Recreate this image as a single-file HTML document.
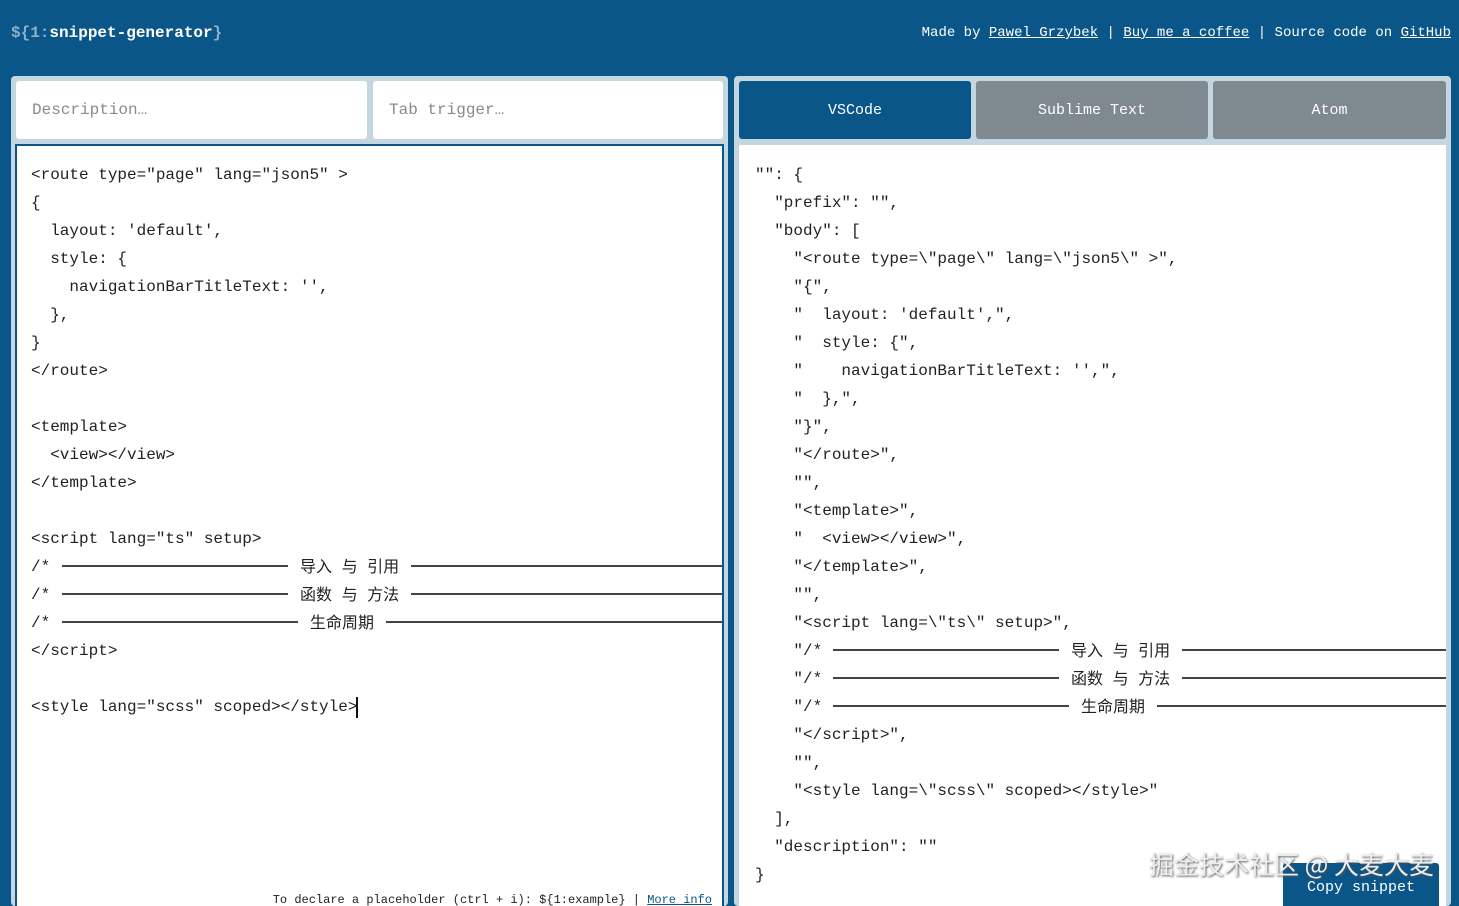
<!DOCTYPE html>
<html style="width:1459px;height:906px;overflow:hidden"><head><meta charset="utf-8">
<style>
*{margin:0;padding:0;box-sizing:border-box}
body{width:1459px;height:906px;background:#0a5689;position:relative;overflow:hidden;font-family:"Liberation Mono","Noto Sans CJK SC",monospace;}
.abs{position:absolute}
.logo{left:11px;top:24px;font-size:16px;font-weight:bold;color:#fff;white-space:pre}
.logo .d{color:#8fb0c9}
.nav{right:8px;top:25px;font-size:14px;color:#fff;white-space:pre}
.nav u{text-decoration:underline}
.panel{background:#c4d6e0;border-radius:4px}
.inp{background:#fff;border-radius:3px;font-size:16px;color:#8a8a8a;padding:20px 16px;height:58px}
.tab{border-radius:3px;font-size:15px;color:#fff;text-align:center;line-height:60px;height:58px}
.code{background:#fff}
.ln{position:absolute;white-space:pre;font-size:16px;line-height:28px;height:28px;color:#222}
.hr{position:absolute;height:1.5px;background:#444}
.cjk{position:absolute;font-family:"Noto Sans CJK SC",sans-serif;font-size:16px;line-height:28px;color:#222;white-space:pre;word-spacing:6px}
</style></head><body>
<div class="abs logo"><span class="d">${1:</span>snippet-generator<span class="d">}</span></div>
<div class="abs nav">Made by <u>Pawel Grzybek</u> | <u>Buy me a coffee</u> | Source code on <u>GitHub</u></div>

<div class="abs panel" style="left:11px;top:76px;width:717px;height:830px"></div>
<div class="abs inp" style="left:16px;top:81px;width:351px">Description…</div>
<div class="abs inp" style="left:373px;top:81px;width:350px">Tab trigger…</div>
<div class="abs code" style="left:15px;top:144px;width:709px;height:762px;border-top:2px solid #0a5689;border-left:2px solid #0a5689;border-right:2px solid #0a5689"></div>
<div class="abs" style="left:17px;top:146px;width:705px;height:760px;overflow:hidden">
<div style="position:absolute;left:-17px;top:-144px;width:1459px;height:906px">
<div class="ln" style="left:31px;top:159px">&lt;route type="page" lang="json5" &gt;</div>
<div class="ln" style="left:31px;top:187px">{</div>
<div class="ln" style="left:31px;top:215px">  layout: 'default',</div>
<div class="ln" style="left:31px;top:243px">  style: {</div>
<div class="ln" style="left:31px;top:271px">    navigationBarTitleText: '',</div>
<div class="ln" style="left:31px;top:299px">  },</div>
<div class="ln" style="left:31px;top:327px">}</div>
<div class="ln" style="left:31px;top:355px">&lt;/route&gt;</div>
<div class="ln" style="left:31px;top:411px">&lt;template&gt;</div>
<div class="ln" style="left:31px;top:439px">  &lt;view&gt;&lt;/view&gt;</div>
<div class="ln" style="left:31px;top:467px">&lt;/template&gt;</div>
<div class="ln" style="left:31px;top:523px">&lt;script lang="ts" setup&gt;</div>
<div class="ln" style="left:31px;top:551px">/*</div><div class="hr" style="left:62px;top:563px;width:226px"></div><div class="cjk" style="left:300px;top:549px">导入 与 引用</div><div class="hr" style="left:411px;top:563px;width:320px"></div>
<div class="ln" style="left:31px;top:579px">/*</div><div class="hr" style="left:62px;top:591px;width:226px"></div><div class="cjk" style="left:300px;top:577px">函数 与 方法</div><div class="hr" style="left:411px;top:591px;width:320px"></div>
<div class="ln" style="left:31px;top:607px">/*</div><div class="hr" style="left:62px;top:619px;width:236px"></div><div class="cjk" style="left:310px;top:605px">生命周期</div><div class="hr" style="left:386px;top:619px;width:345px"></div>
<div class="ln" style="left:31px;top:635px">&lt;/script&gt;</div>
<div class="ln" style="left:31px;top:691px">&lt;style lang="scss" scoped&gt;&lt;/style&gt;</div>
<div class="abs" style="left:356px;top:695px;width:1.5px;height:21px;background:#111"></div>
<div class="abs" style="right:747px;top:891px;font-size:12px;color:#222;white-space:pre">To declare a placeholder (ctrl + i): ${1:example} | <u style="color:#0a5689">More info</u></div>
</div></div>

<div class="abs panel" style="left:734px;top:76px;width:717px;height:830px"></div>
<div class="abs tab" style="left:739px;top:81px;width:232px;background:#0a5689">VSCode</div>
<div class="abs tab" style="left:976px;top:81px;width:232px;background:#7f8a90">Sublime Text</div>
<div class="abs tab" style="left:1213px;top:81px;width:233px;background:#7f8a90">Atom</div>
<div class="abs code" style="left:739px;top:145px;width:707px;height:761px"></div>
<div class="abs" style="left:739px;top:145px;width:707px;height:761px;overflow:hidden">
<div style="position:absolute;left:-739px;top:-143px;width:1459px;height:906px">
<div class="ln" style="left:755px;top:159px">"": {</div>
<div class="ln" style="left:755px;top:187px">  "prefix": "",</div>
<div class="ln" style="left:755px;top:215px">  "body": [</div>
<div class="ln" style="left:755px;top:243px">    "&lt;route type=\"page\" lang=\"json5\" &gt;",</div>
<div class="ln" style="left:755px;top:271px">    "{",</div>
<div class="ln" style="left:755px;top:299px">    "  layout: 'default',",</div>
<div class="ln" style="left:755px;top:327px">    "  style: {",</div>
<div class="ln" style="left:755px;top:355px">    "    navigationBarTitleText: '',",</div>
<div class="ln" style="left:755px;top:383px">    "  },",</div>
<div class="ln" style="left:755px;top:411px">    "}",</div>
<div class="ln" style="left:755px;top:439px">    "&lt;/route&gt;",</div>
<div class="ln" style="left:755px;top:467px">    "",</div>
<div class="ln" style="left:755px;top:495px">    "&lt;template&gt;",</div>
<div class="ln" style="left:755px;top:523px">    "  &lt;view&gt;&lt;/view&gt;",</div>
<div class="ln" style="left:755px;top:551px">    "&lt;/template&gt;",</div>
<div class="ln" style="left:755px;top:579px">    "",</div>
<div class="ln" style="left:755px;top:607px">    "&lt;script lang=\"ts\" setup&gt;",</div>
<div class="ln" style="left:755px;top:635px">    "/*</div><div class="hr" style="left:833px;top:647px;width:226px"></div><div class="cjk" style="left:1071px;top:633px">导入 与 引用</div><div class="hr" style="left:1182px;top:647px;width:280px"></div>
<div class="ln" style="left:755px;top:663px">    "/*</div><div class="hr" style="left:833px;top:675px;width:226px"></div><div class="cjk" style="left:1071px;top:661px">函数 与 方法</div><div class="hr" style="left:1182px;top:675px;width:280px"></div>
<div class="ln" style="left:755px;top:691px">    "/*</div><div class="hr" style="left:833px;top:703px;width:236px"></div><div class="cjk" style="left:1081px;top:689px">生命周期</div><div class="hr" style="left:1157px;top:703px;width:300px"></div>
<div class="ln" style="left:755px;top:719px">    "&lt;/script&gt;",</div>
<div class="ln" style="left:755px;top:747px">    "",</div>
<div class="ln" style="left:755px;top:775px">    "&lt;style lang=\"scss\" scoped&gt;&lt;/style&gt;"</div>
<div class="ln" style="left:755px;top:803px">  ],</div>
<div class="ln" style="left:755px;top:831px">  "description": ""</div>
<div class="ln" style="left:755px;top:859px">}</div>
</div></div>
<div class="abs" style="left:1283px;top:863px;width:156px;height:43px;background:#0a5689;border-radius:3px 3px 0 0;color:#fff;font-size:15px;padding:16px 0 0 24px">Copy snippet</div>
<div class="abs" style="left:1149px;top:846px;font-family:'Noto Sans CJK SC',sans-serif;font-size:25px;color:#eee;text-shadow:1px 1px 2px #555;white-space:pre">掘金技术社区 @ 大麦大麦</div>
</body></html>
